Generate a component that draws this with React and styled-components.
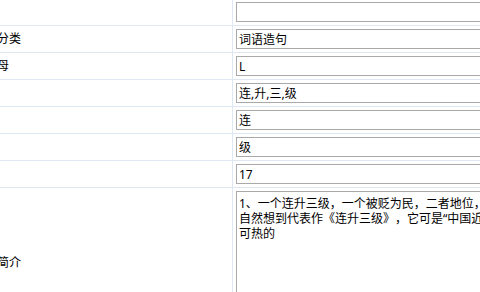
import React from "react";
import styled, { createGlobalStyle } from "styled-components";

const Global = createGlobalStyle`
  html, body { margin: 0; padding: 0; background: #fff; overflow: hidden; }
  body { font-family: "Noto Sans", "Noto Sans CJK SC", sans-serif; font-size: 12px; color: #000; text-spacing-trim: space-all; }
`;

const Form = styled.div`
  width: 900px;
  margin: -1px 0 0 -30px;
  display: flex;
  flex-direction: column;
`;

const Row = styled.div`
  display: flex;
  border-bottom: 1px solid #dde8f2;
`;

const Label = styled.div`
  width: 259px;
  flex: none;
  padding-left: 3px;
  border-right: 1px solid #dde8f2;
  display: flex;
  align-items: center;
  line-height: 16px;
`;

const Cell = styled.div`
  flex: 1;
  padding: 3px;
  display: flex;
  align-items: flex-start;
`;

const Input = styled.input`
  box-sizing: border-box;
  width: 520px;
  height: 20px;
  margin: 0;
  padding: 0 2px;
  border: 1px solid #a9a9a9;
  font: inherit;
  font-size: 12px;
  color: #000;
  background: #fff;
  outline: none;
  text-spacing-trim: space-all;
`;

const Area = styled.textarea`
  box-sizing: border-box;
  width: 520px;
  height: ${(p) => p.$h}px;
  margin: 0;
  padding: 4px 2px;
  border: 1px solid #a9a9a9;
  font: inherit;
  font-size: 12px;
  line-height: 15px;
  color: #000;
  background: #fff;
  resize: none;
  outline: none;
  text-spacing-trim: space-all;
`;

const fields = [
  { label: "词语", value: "" },
  { label: "词语分类", value: "词语造句" },
  { label: "首字母", value: "L" },
  { label: "分字", value: "连,升,三,级" },
  { label: "首字", value: "连" },
  { label: "尾字", value: "级" },
  { label: "笔画", value: "17" },
];

const intro =
  "1、一个连升三级，一个被贬为民，二者地位，天壤之别，令人\n自然想到代表作《连升三级》，它可是“中国近代相声史上炙手\n可热的";

export default function App() {
  return (
    <>
      <Global />
      <Form>
        {fields.map((f) => (
          <Row key={f.label}>
            <Label>{f.label}</Label>
            <Cell>
              <Input defaultValue={f.value} readOnly />
            </Cell>
          </Row>
        ))}
        <Row>
          <Label>词语简介</Label>
          <Cell>
            <Area $h={144} defaultValue={intro} readOnly />
          </Cell>
        </Row>
      </Form>
    </>
  );
}
